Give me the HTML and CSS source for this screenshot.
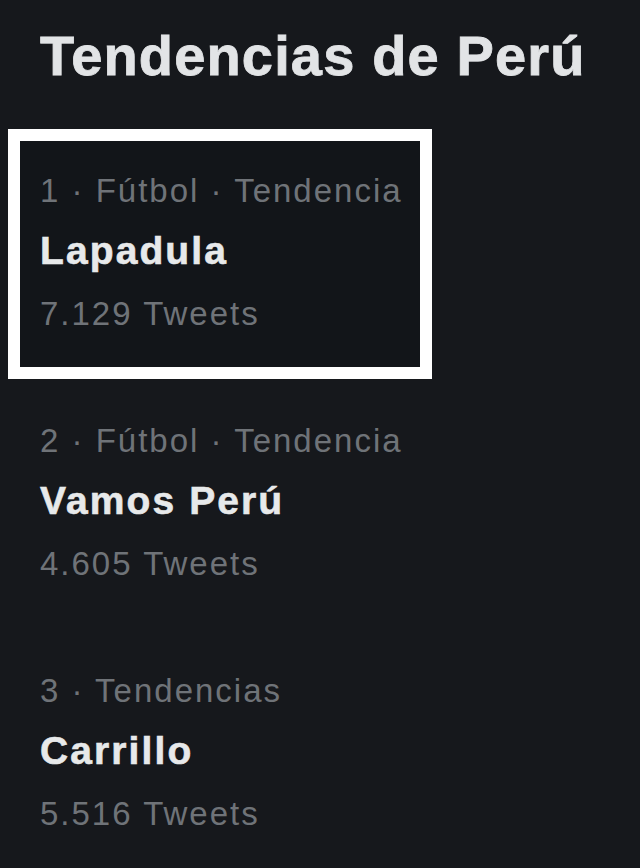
FILE: index.html
```html
<!DOCTYPE html>
<html lang="es">
<head>
<meta charset="utf-8">
<title>Tendencias de Perú</title>
<link rel="stylesheet" href="styles.css">
</head>
<body>
<main class="panel">
  <h1 class="panel-title">Tendencias de Perú</h1>
  <ul class="trend-list">
    <li class="trend trend--highlight">
      <div class="trend-meta">1 · Fútbol · Tendencia</div>
      <div class="trend-name">Lapadula</div>
      <div class="trend-count">7.129 Tweets</div>
    </li>
    <li class="trend">
      <div class="trend-meta">2 · Fútbol · Tendencia</div>
      <div class="trend-name">Vamos Perú</div>
      <div class="trend-count">4.605 Tweets</div>
    </li>
    <li class="trend">
      <div class="trend-meta">3 · Tendencias</div>
      <div class="trend-name">Carrillo</div>
      <div class="trend-count">5.516 Tweets</div>
    </li>
  </ul>
</main>
</body>
</html>
```

FILE: styles.css
```css
html {
  background: #16181c;
}

body {
  margin: 0;
  background: #16181c;
  font-family: "Liberation Sans", Arial, sans-serif;
  color: #e7e9ea;
}

.panel {
  display: flex;
  flex-direction: column;
}

.panel-title {
  margin: 28px 0 45px 0;
  padding-left: 40px;
  font-size: 56px;
  line-height: 56px;
  font-weight: 700;
  letter-spacing: 1.15px;
  color: #e2e4e6;
  -webkit-text-stroke: 0.8px #e2e4e6;
}

.trend-list {
  list-style: none;
  margin: 0;
  padding: 0;
  display: flex;
  flex-direction: column;
}

.trend {
  margin-left: 8px;
  width: 424px;
  box-sizing: border-box;
  padding: 34px 0 34px 32px;
  display: flex;
  flex-direction: column;
}

.trend--highlight {
  outline: 12px solid #ffffff;
  outline-offset: -12px;
  background: #121519;
}

.trend-meta,
.trend-count {
  font-size: 33px;
  color: #6f7378;
  white-space: nowrap;
}

.trend-meta {
  line-height: 56px;
  letter-spacing: 2px;
}

.trend-name {
  font-size: 39px;
  line-height: 64px;
  font-weight: 700;
  letter-spacing: 2.1px;
  color: #e7e9ea;
  -webkit-text-stroke: 0.6px #e7e9ea;
  white-space: nowrap;
}

.trend-count {
  line-height: 62px;
  letter-spacing: 2px;
}
```
